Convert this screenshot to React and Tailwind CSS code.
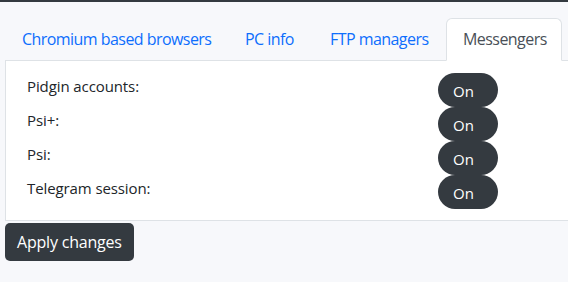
export default function App() {
  const rows = ["Pidgin accounts:", "Psi+:", "Psi:", "Telegram session:"];
  return (
    <div
      className="w-[568px] h-[282px] overflow-hidden bg-[#f7f8fb] text-[#212529]"
      style={{ fontFamily: '"Open Sans", "Noto Sans", sans-serif' }}
    >
      <div className="h-[2px] bg-[#343a40]" />
      <div className="mt-4 ml-[5px] w-[600px]">
        <div className="flex border-b border-[#dee2e6] text-[16px] leading-6 tracking-[-0.55px]">
          <div className="w-[223px] border border-transparent pl-4 py-2 text-[#0d6efd] whitespace-nowrap">
            Chromium based browsers
          </div>
          <div className="w-[85px] border border-transparent pl-4 py-2 text-[#0d6efd] whitespace-nowrap">
            PC info
          </div>
          <div className="w-[133px] border border-transparent pl-4 py-2 text-[#0d6efd] whitespace-nowrap">
            FTP managers
          </div>
          <div className="w-[116px] -mb-px border border-[#dee2e6] border-b-white bg-white rounded-t-[6px] pl-4 py-2 text-[#495057] whitespace-nowrap">
            Messengers
          </div>
        </div>
        <div className="bg-white border-l border-b border-[#dee2e6] pt-3 pb-[11px] pl-[21px]">
          {rows.map((r) => (
            <div key={r} className="flex items-start h-[34px]">
              <div className="w-[411px] text-[15px] leading-[22px] pt-[2px] tracking-[-0.1px]">{r}</div>
              <div className="h-[34px] w-[60px] rounded-full bg-[#343a40] text-white text-[15px] leading-[34px] pl-[15px] pt-px">
                On
              </div>
            </div>
          ))}
        </div>
        <div className="mt-[2px] inline-block bg-[#343a40] text-white text-[16px] leading-6 px-3 py-[7px] rounded-[5px] tracking-[-0.2px]">
          Apply changes
        </div>
      </div>
    </div>
  );
}
